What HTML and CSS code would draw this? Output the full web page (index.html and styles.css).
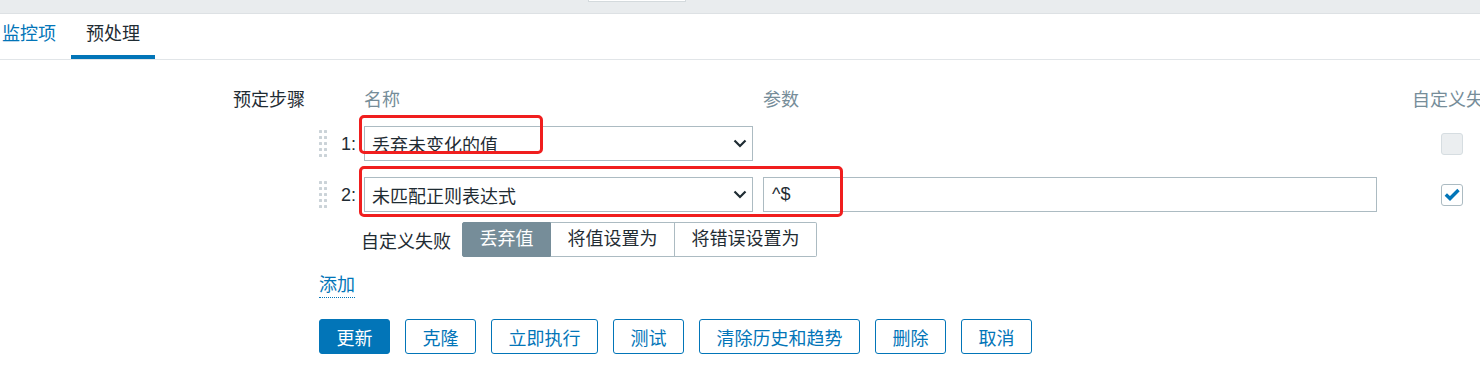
FILE: index.html
```html
<!DOCTYPE html>
<html lang="zh-CN">

<head>
  <meta charset="UTF-8">
  <meta name="viewport" content="width=device-width, initial-scale=1.0">
  <title>预处理</title>
  <link rel="stylesheet" href="styles.css">
</head>

<body>
  <div class="top-bar">
    <div class="top-bar-tab"></div>
  </div>

  <ul class="tabs">
    <li class="tab">监控项</li>
    <li class="tab active">预处理</li>
  </ul>

  <div class="form">
    <div class="form-row">
      <div class="form-label">预定步骤</div>
      <div class="form-field">

        <div class="step-grid steps-head">
          <div></div>
          <div></div>
          <div class="col-name">名称</div>
          <div class="col-param">参数</div>
          <div class="col-fail">自定义失败</div>
        </div>

        <div class="step-grid step">
          <div class="drag-handle">
            <svg width="9" height="27" viewBox="0 0 9 27">
              <g fill="#cbd3d8">
                <rect x="0" y="0" width="3" height="3" rx="0.5"/><rect x="5" y="0" width="3" height="3" rx="0.5"/>
                <rect x="0" y="6" width="3" height="3" rx="0.5"/><rect x="5" y="6" width="3" height="3" rx="0.5"/>
                <rect x="0" y="12" width="3" height="3" rx="0.5"/><rect x="5" y="12" width="3" height="3" rx="0.5"/>
                <rect x="0" y="18" width="3" height="3" rx="0.5"/><rect x="5" y="18" width="3" height="3" rx="0.5"/>
                <rect x="0" y="24" width="3" height="3" rx="0.5"/><rect x="5" y="24" width="3" height="3" rx="0.5"/>
              </g>
            </svg>
          </div>
          <div class="step-num">1:</div>
          <div class="select">
            <span>丢弃未变化的值</span>
            <svg width="14" height="9" viewBox="0 0 14 9"><path d="M1.5 1.5 L7 7 L12.5 1.5" fill="none" stroke="#1f2c33" stroke-width="2.2"/></svg>
          </div>
          <div></div>
          <div class="col-check">
            <span class="checkbox disabled"></span>
          </div>
        </div>

        <div class="step-grid step">
          <div class="drag-handle">
            <svg width="9" height="27" viewBox="0 0 9 27">
              <g fill="#cbd3d8">
                <rect x="0" y="0" width="3" height="3" rx="0.5"/><rect x="5" y="0" width="3" height="3" rx="0.5"/>
                <rect x="0" y="6" width="3" height="3" rx="0.5"/><rect x="5" y="6" width="3" height="3" rx="0.5"/>
                <rect x="0" y="12" width="3" height="3" rx="0.5"/><rect x="5" y="12" width="3" height="3" rx="0.5"/>
                <rect x="0" y="18" width="3" height="3" rx="0.5"/><rect x="5" y="18" width="3" height="3" rx="0.5"/>
                <rect x="0" y="24" width="3" height="3" rx="0.5"/><rect x="5" y="24" width="3" height="3" rx="0.5"/>
              </g>
            </svg>
          </div>
          <div class="step-num">2:</div>
          <div class="select">
            <span>未匹配正则表达式</span>
            <svg width="14" height="9" viewBox="0 0 14 9"><path d="M1.5 1.5 L7 7 L12.5 1.5" fill="none" stroke="#1f2c33" stroke-width="2.2"/></svg>
          </div>
          <div class="col-param">
            <div class="input">^$</div>
          </div>
          <div class="col-check">
            <span class="checkbox">
              <svg width="16" height="13" viewBox="0 0 16 13"><path d="M1.8 6.5 L6 10.5 L14.5 2" fill="none" stroke="#0275b8" stroke-width="3.4"/></svg>
            </span>
          </div>
        </div>

        <div class="step-grid step-error">
          <div class="error-options">
            <span class="error-label">自定义失败</span>
            <div class="radio-group">
              <span class="radio-item checked">丢弃值</span>
              <span class="radio-item">将值设置为</span>
              <span class="radio-item">将错误设置为</span>
            </div>
          </div>
        </div>

        <a class="link-add">添加</a>
      </div>
    </div>

    <div class="form-actions">
      <button class="btn btn-main">更新</button>
      <button class="btn">克隆</button>
      <button class="btn">立即执行</button>
      <button class="btn">测试</button>
      <button class="btn">清除历史和趋势</button>
      <button class="btn">删除</button>
      <button class="btn">取消</button>
    </div>
  </div>

  <!-- red marks from the screenshot -->
  <div class="mark mark-1"></div>
  <div class="mark mark-2"></div>
</body>

</html>
```

FILE: styles.css
```css
html,
body {
  overflow: hidden;
}

body {
  margin: 0;
  width: 1480px;
  height: 365px;
  position: relative;
  background-color: #fff;
  color: #1f2c33;
  font-family: "Liberation Sans", "Noto Sans CJK SC", sans-serif;
  font-size: 18px;
}

.top-bar {
  height: 13px;
  background-color: #e9ecee;
  border-bottom: 1px solid #dde1e4;
  position: relative;
}

.top-bar-tab {
  position: absolute;
  left: 588px;
  top: 0;
  width: 96px;
  height: 1px;
  background-color: #fff;
  border: 1px solid #d4dadd;
  border-top: 0;
}

.tabs {
  display: flex;
  margin: 0;
  padding: 0;
  list-style: none;
  border-bottom: 1px solid #e1e5e8;
}

.tab {
  padding: 0 15px;
  line-height: 41px;
  border-bottom: 4px solid transparent;
  color: #0275b8;
}

.tab:first-child {
  margin-left: -13px;
}

.tab.active {
  color: #1f2c33;
  border-bottom-color: #0275b8;
}

.form {
  padding-top: 28px;
}

.form-row {
  display: flex;
}

.form-label {
  flex-shrink: 0;
  box-sizing: border-box;
  width: 319px;
  padding-right: 14px;
  text-align: right;
  line-height: 24px;
  white-space: nowrap;
}

.form-field {
  flex-shrink: 0;
  display: flex;
  flex-direction: column;
  align-items: flex-start;
}

.step-grid {
  display: grid;
  grid-template-columns: 15px 30px 389px 624px 130px;
  align-items: center;
}

.steps-head {
  line-height: 24px;
  color: #768d99;
  white-space: nowrap;
}

.col-param {
  padding-left: 10px;
}

.col-fail {
  padding-left: 35px;
}

.step {
  margin-top: 14px;
}

.step + .step {
  margin-top: 16px;
}

.drag-handle {
  display: flex;
  align-items: center;
}

.step-num {
  text-align: right;
  padding-right: 8px;
  line-height: 24px;
}

.select {
  box-sizing: border-box;
  height: 35px;
  display: flex;
  align-items: center;
  justify-content: space-between;
  padding: 0 5px 0 7px;
  border: 1px solid #acbbc2;
  white-space: nowrap;
}

.input {
  box-sizing: border-box;
  width: 614px;
  height: 35px;
  line-height: 33px;
  padding: 0 8px;
  border: 1px solid #acbbc2;
}

.col-check {
  padding-left: 64px;
  display: flex;
}

.checkbox {
  box-sizing: border-box;
  width: 22px;
  height: 22px;
  border: 1px solid #acbbc2;
  border-radius: 3px;
  display: flex;
  align-items: center;
  justify-content: center;
}

.checkbox.disabled {
  background-color: #ebeef0;
  border-color: #d6dde1;
}

.step-error {
  margin-top: 10px;
}

.error-options {
  grid-column: 3 / -1;
  display: flex;
  align-items: center;
  margin-left: -3px;
}

.error-label {
  margin-right: 11px;
  white-space: nowrap;
}

.radio-group {
  display: flex;
}

.radio-item {
  box-sizing: border-box;
  height: 35px;
  line-height: 33px;
  padding: 0 16.5px;
  border: 1px solid #acbbc2;
  border-left: 0;
  white-space: nowrap;
}

.radio-item:first-child {
  border-left: 1px solid #acbbc2;
  border-radius: 2px 0 0 2px;
}

.radio-item:last-child {
  border-radius: 0 2px 2px 0;
}

.radio-item.checked {
  background-color: #768d99;
  border-color: #768d99;
  color: #fff;
}

.link-add {
  margin-top: 16px;
  line-height: 24px;
  color: #0275b8;
  border-bottom: 1px dotted #0275b8;
  cursor: pointer;
}

.form-actions {
  display: flex;
  gap: 15px;
  margin-top: 21px;
  padding-left: 319px;
}

.btn {
  box-sizing: border-box;
  height: 35px;
  padding: 0 16.5px;
  border: 1px solid #0275b8;
  border-radius: 3px;
  background-color: #fff;
  color: #0275b8;
  font-family: inherit;
  font-size: 18px;
  white-space: nowrap;
}

.btn-main {
  background-color: #0275b8;
  color: #fff;
}

.mark {
  position: absolute;
  box-sizing: border-box;
  border: 3px solid #f01e1e;
  border-radius: 5px;
  pointer-events: none;
}

.mark-1 {
  left: 359px;
  top: 115px;
  width: 184px;
  height: 39px;
}

.mark-2 {
  left: 359px;
  top: 166px;
  width: 484px;
  height: 51px;
}
```
